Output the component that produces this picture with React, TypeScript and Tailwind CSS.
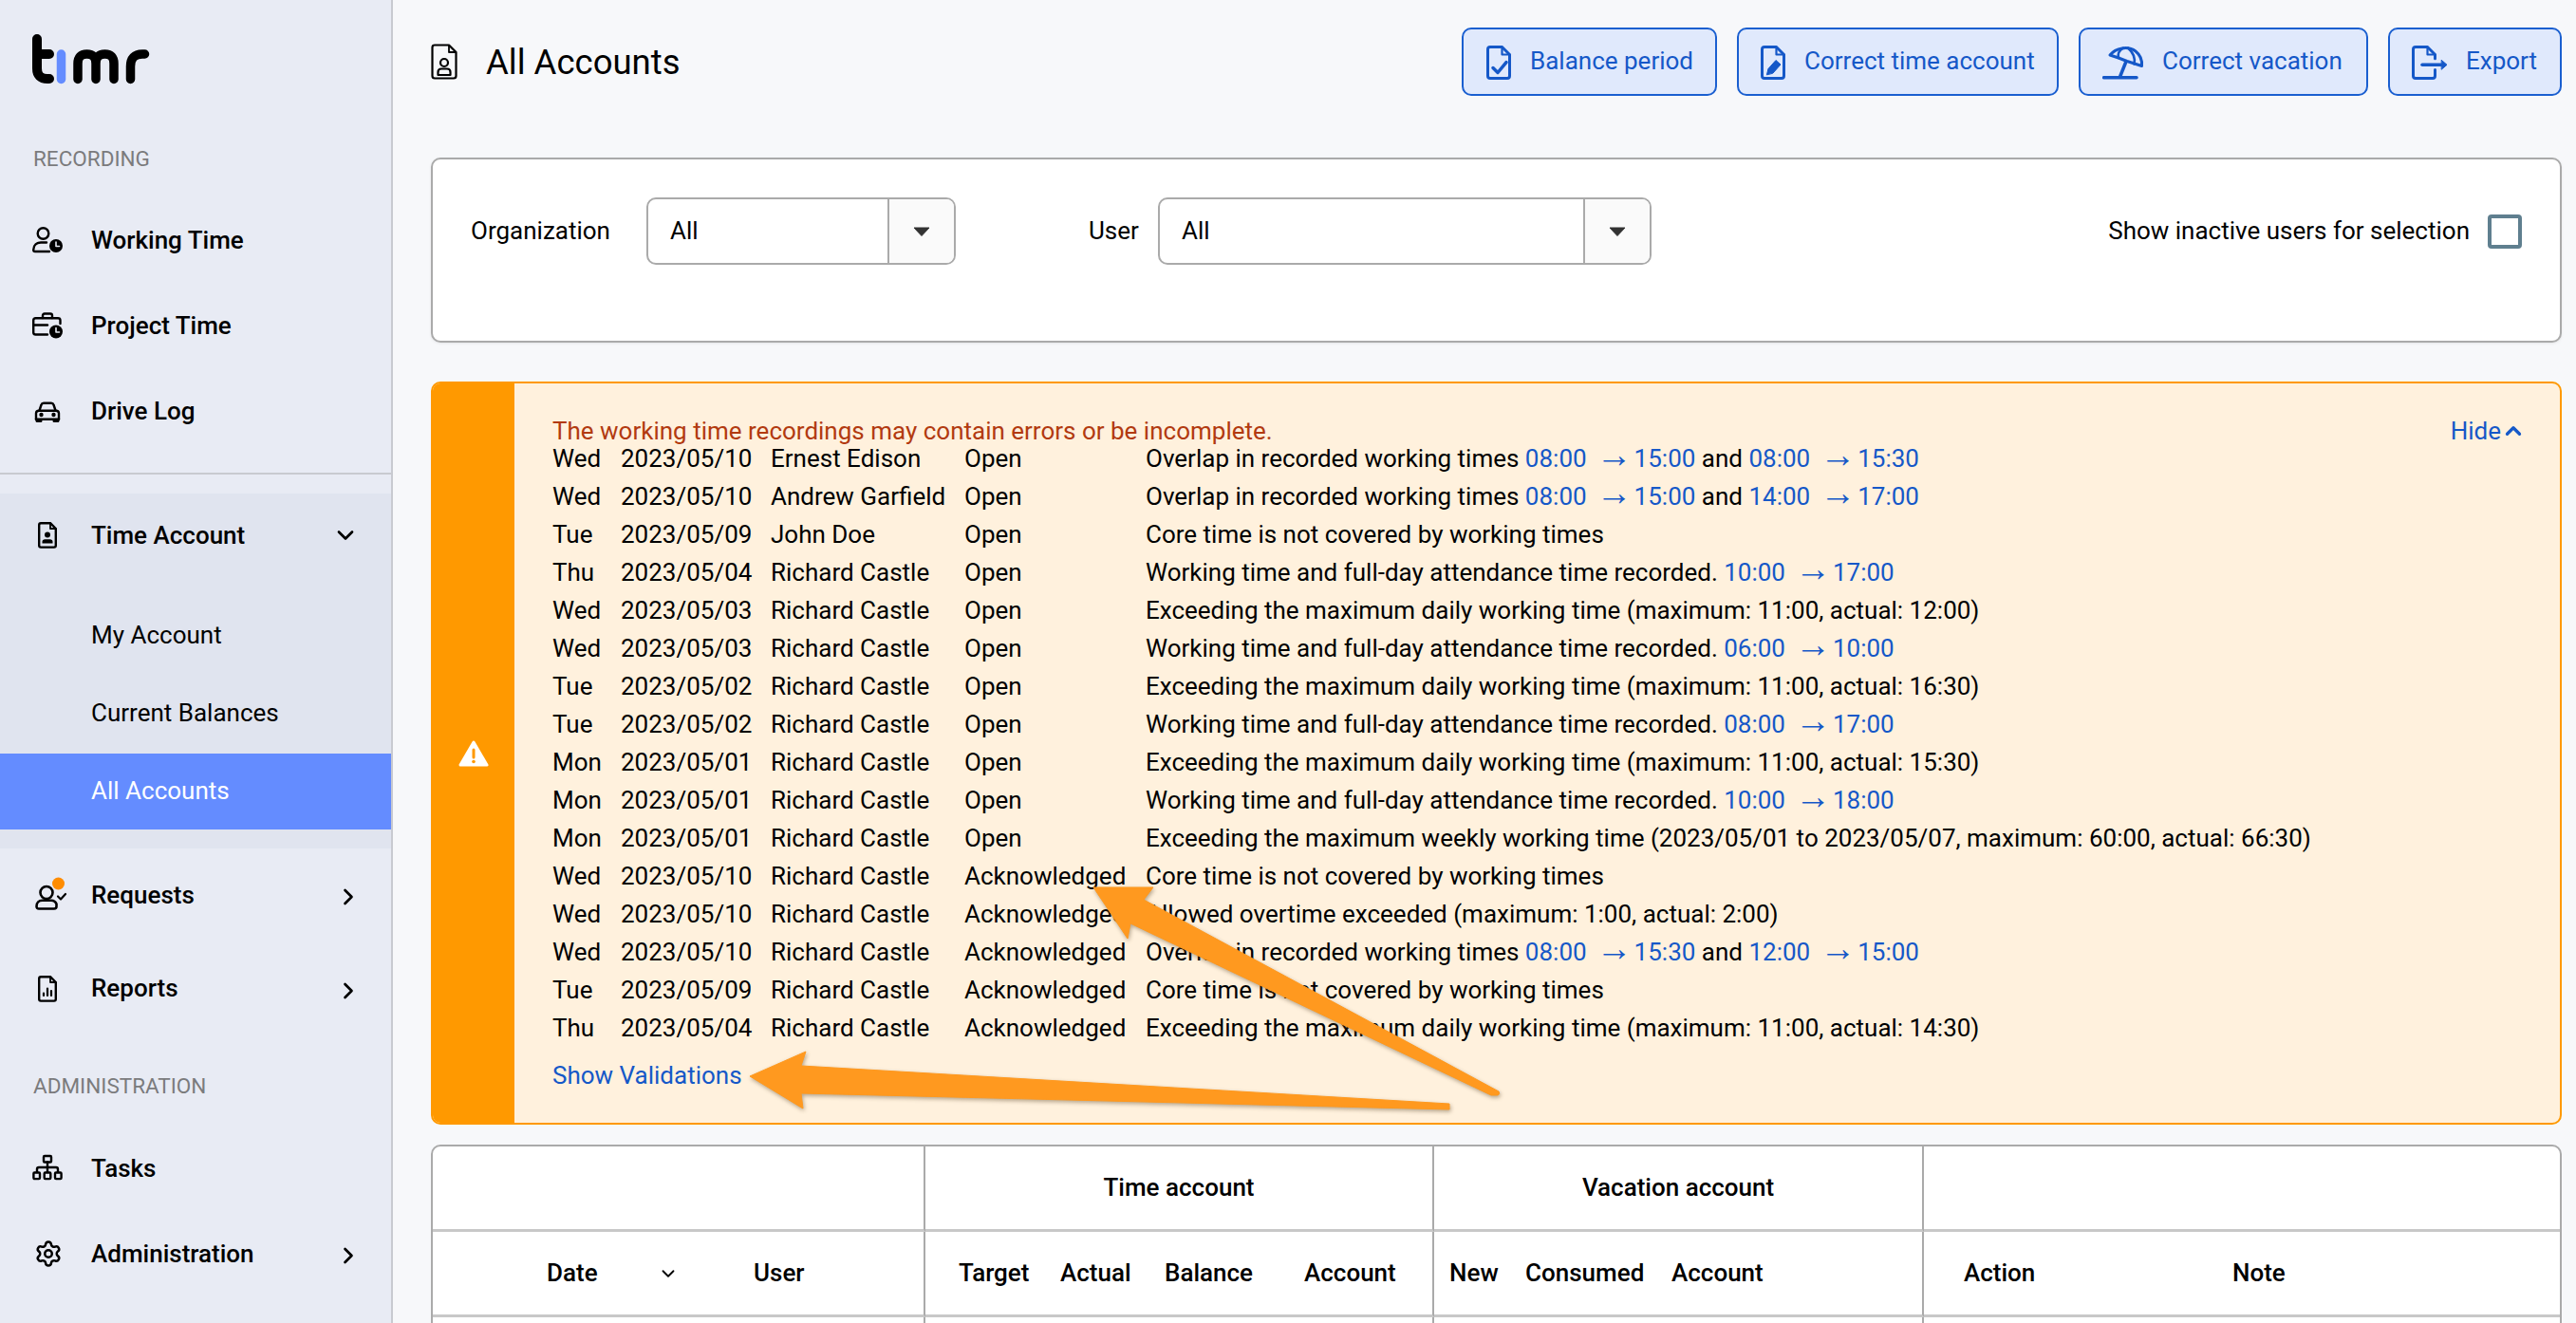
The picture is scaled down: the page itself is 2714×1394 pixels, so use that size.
import React from "react";
import { ChevronDown, ChevronRight, ChevronUp, Settings } from "lucide-react";

const BLUE = "#1558c8";

const T = ({ a, b }: { a: string; b: string }) => (
  <span className="text-[#1558c8]">
    {a}
    <span className="ml-[10px] mr-[2px] text-[38px] leading-[0] font-['Liberation_Sans']">→</span>
    {b}
  </span>
);

const EXC = (x: string) => `Exceeding the maximum daily working time (maximum: 11:00, actual: ${x})`;
const WT = "Working time and full-day attendance time recorded. ";
const OV = "Overlap in recorded working times ";
const CORE = "Core time is not covered by working times";
const RC = "Richard Castle";

type Row = [string, string, string, string, React.ReactNode];
const rows: Row[] = [
  ["Wed", "2023/05/10", "Ernest Edison", "Open", <>{OV}<T a="08:00" b="15:00" /> and <T a="08:00" b="15:30" /></>],
  ["Wed", "2023/05/10", "Andrew Garfield", "Open", <>{OV}<T a="08:00" b="15:00" /> and <T a="14:00" b="17:00" /></>],
  ["Tue", "2023/05/09", "John Doe", "Open", CORE],
  ["Thu", "2023/05/04", RC, "Open", <>{WT}<T a="10:00" b="17:00" /></>],
  ["Wed", "2023/05/03", RC, "Open", EXC("12:00")],
  ["Wed", "2023/05/03", RC, "Open", <>{WT}<T a="06:00" b="10:00" /></>],
  ["Tue", "2023/05/02", RC, "Open", EXC("16:30")],
  ["Tue", "2023/05/02", RC, "Open", <>{WT}<T a="08:00" b="17:00" /></>],
  ["Mon", "2023/05/01", RC, "Open", EXC("15:30")],
  ["Mon", "2023/05/01", RC, "Open", <>{WT}<T a="10:00" b="18:00" /></>],
  ["Mon", "2023/05/01", RC, "Open", "Exceeding the maximum weekly working time (2023/05/01 to 2023/05/07, maximum: 60:00, actual: 66:30)"],
  ["Wed", "2023/05/10", RC, "Acknowledged", CORE],
  ["Wed", "2023/05/10", RC, "Acknowledged", "Allowed overtime exceeded (maximum: 1:00, actual: 2:00)"],
  ["Wed", "2023/05/10", RC, "Acknowledged", <>{OV}<T a="08:00" b="15:30" /> and <T a="12:00" b="15:00" /></>],
  ["Tue", "2023/05/09", RC, "Acknowledged", CORE],
  ["Thu", "2023/05/04", RC, "Acknowledged", EXC("14:30")],
];

const Logo = () => (
  <svg width="130" height="56" viewBox="30 34 130 56" fill="none" strokeLinecap="round" strokeLinejoin="round" className="block">
    <path d="M39 41V72Q39 83 50 83H52M39 57H52" stroke="#000" strokeWidth="10" />
    <path d="M64.5 57V83.5" stroke="#648cff" strokeWidth="9.5" />
    <path d="M82 83.5V67Q82 57 91.5 57Q101 57 101 67V83.5M101 67Q101 57 110.5 57Q120 57 120 67V83.5" stroke="#000" strokeWidth="9.5" />
    <path d="M137.5 83.5V70Q137.5 57 150 57H152.5" stroke="#000" strokeWidth="9.5" />
  </svg>
);

const Clock = ({ cx, cy, bg = "#e8ebf4" }: { cx: number; cy: number; bg?: string }) => (
  <>
    <circle cx={cx} cy={cy} r="7" fill="#000" stroke="none" />
    <path d={`M${cx} ${cy - 4}V${cy + 0.5}H${cx + 3.5}`} stroke={bg} strokeWidth="1.6" fill="none" />
  </>
);

const S = ({ children, w = 32, h = 30 }: { children: React.ReactNode; w?: number; h?: number }) => (
  <svg width={w} height={h} viewBox={`0 0 ${w} ${h}`} fill="none" stroke="#000" strokeWidth="2.4" strokeLinecap="round" strokeLinejoin="round" className="block shrink-0">
    {children}
  </svg>
);

const IconWork = () => (
  <S>
    <circle cx="11.5" cy="8" r="5.8" />
    <path d="M18 27H3Q1.2 27 1.2 25.2C1.2 20 5 17.5 9 17.5H15" />
    <Clock cx={25} cy={21} />
  </S>
);
const IconProject = () => (
  <S>
    <path d="M11 7V4.5Q11 2.5 13 2.5H19Q21 2.5 21 4.5V7" />
    <path d="M16 24.5H3.5Q1.2 24.5 1.2 22.5V9.5Q1.2 7.3 3.5 7.3H27Q29.5 7.3 29.5 9.5V13" />
    <path d="M1.2 14.5H16" />
    <Clock cx={25} cy={21.5} />
  </S>
);
const IconCar = () => (
  <S>
    <path d="M7.5 14.5L9.5 8.5Q10 6.8 12 6.8H20Q22 6.8 22.5 8.5L24.5 14.5" />
    <path d="M4 24V17.5Q4 14.7 7 14.7H25Q28 14.7 28 17.5V24" />
    <path d="M4 23.8H28" />
    <path d="M5 25.5H9M23 25.5H27" strokeWidth="3" />
    <circle cx="9.5" cy="19" r="1" fill="#000" />
    <circle cx="22.5" cy="19" r="1" fill="#000" />
  </S>
);
const DocBase = ({ children }: { children?: React.ReactNode }) => (
  <S>
    <path d="M19 2.2H9Q7.2 2.2 7.2 4V25.8Q7.2 27.6 9 27.6H23Q24.8 27.6 24.8 25.8V8L19 2.2Z" />
    <path d="M19 2.2V8H24.8" strokeWidth="1.8" />
    {children}
  </S>
);
const IconDocPerson = () => (
  <DocBase>
    <circle cx="16" cy="14.5" r="3" fill="#000" stroke="none" />
    <path d="M10.5 23.5V22Q10.5 19.2 13.5 19.2H18.5Q21.5 19.2 21.5 22V23.5H10.5Z" fill="#000" stroke="none" />
  </DocBase>
);
const IconRequests = () => (
  <svg width="38" height="38" viewBox="0 0 38 38" fill="none" stroke="#000" strokeWidth="2.6" strokeLinecap="round" strokeLinejoin="round" className="block shrink-0 ml-[11px]">
    <circle cx="12" cy="16.5" r="6.5" />
    <path d="M16 33.5H4Q1.5 33.5 1.5 31C1.5 27 4 24.8 7.5 24.8H17Q21 24.8 22.5 28.5V31Q22.5 33.5 20 33.5H16Z" />
    <path d="M24 20.5L27 23.5L32 18" strokeWidth="2.2" />
    <circle cx="24.5" cy="7" r="6.5" fill="#ff8c00" stroke="none" />
  </svg>
);
const IconReports = () => (
  <DocBase>
    <path d="M12 22V19.5M16 22V14.5M20 22V17" strokeWidth="2.2" />
  </DocBase>
);
const IconTasks = () => (
  <S>
    <rect x="12" y="2" width="8" height="6.5" rx="1" />
    <path d="M16 8.5V14M5 19V16Q5 14 7 14H25Q27 14 27 16V19M16 14V19" />
    <rect x="1.4" y="19.5" width="6.6" height="6.6" rx="1" />
    <rect x="12.7" y="19.5" width="6.6" height="6.6" rx="1" />
    <rect x="24" y="19.5" width="6.6" height="6.6" rx="1" />
  </S>
);
const IconGear = () => <Settings size={30} strokeWidth={2} color="#000" className="shrink-0 ml-[1px]" />;

const Section = ({ children, cls }: { children: string; cls: string }) => (
  <div className={`pl-[35px] text-[22.5px] leading-[30px] text-[#7b7b7d] tracking-normal ${cls}`}>{children}</div>
);

const NavItem = ({ icon, label, h, chev }: { icon: React.ReactNode; label: string; h: string; chev?: "r" | "d" }) => (
  <div className={`flex items-center pl-[34px] ${h}`}>
    <div className="w-[32px] mr-[30px] flex justify-center">{icon}</div>
    <span className="text-[26px] font-medium text-black">{label}</span>
    {chev === "r" && <ChevronRight size={28} strokeWidth={2.3} color="#000" className="ml-auto mr-[31px] mt-[4px]" />}
    {chev === "d" && <ChevronDown size={28} strokeWidth={2.3} color="#000" className="ml-auto mr-[34px]" />}
  </div>
);

const B = ({ children, w = 32, h = 38 }: { children: React.ReactNode; w?: number; h?: number }) => (
  <svg width={w} height={h} viewBox={`0 0 ${w} ${h}`} fill="none" stroke={BLUE} strokeWidth="3" strokeLinecap="round" strokeLinejoin="round" className="block shrink-0 mt-[3px]">
    {children}
  </svg>
);
const FileShape = () => (
  <>
    <path d="M17.5 2.5H5Q2.5 2.5 2.5 5V33Q2.5 35.5 5 35.5H23Q25.5 35.5 25.5 33V10.5L17.5 2.5Z" />
    <path d="M17.5 2.5V10.5H25.5" strokeWidth="2.2" />
  </>
);

const BalIcon = () => (
  <B w={28}>
    <FileShape />
    <path d="M8 24.5L13 29.5L22 18.7" strokeWidth="3.5" />
  </B>
);
const CorrIcon = () => (
  <B w={28}>
    <FileShape />
    <path d="M7.5 31.5L9 25.5L17 16.5L22 21L14 30Z" fill={BLUE} strokeWidth="1" />
  </B>
);
const BeachIcon = () => (
  <B w={44}>
    <path d="M1.5 34.7H36" strokeWidth="3.5" />
    <path d="M24.5 19L18.5 34" strokeWidth="3.5" />
    <path d="M8 11C14 3.5 27 1 35 7C40 11 42 17 41.5 22.5L26 17.5L17 14Z" />
    <path d="M22 3.5C18 6 16 10 17 14M27 3.5C32 8 35 14 33.5 20.5" strokeWidth="2.6" />
  </B>
);
const ExportIcon = () => (
  <B w={42}>
    <path d="M25.5 26.5V33Q25.5 35.5 23 35.5H5Q2.5 35.5 2.5 33V5Q2.5 2.5 5 2.5H17.5L25.5 10.5V14.7" />
    <path d="M17.5 2.5V10.5H25.5" strokeWidth="2.2" />
    <path d="M12 21.3H32" strokeWidth="3.5" />
    <path d="M32.5 16.5L38 21.3L32.5 26Z" fill={BLUE} strokeWidth="1" />
  </B>
);

const Btn = ({ icon, label, cls }: { icon: React.ReactNode; label: string; cls: string }) => (
  <div className={`h-[72px] flex items-center rounded-[10px] border-[2.5px] border-[#1a5fd0] bg-[#e0e9fc] text-[#1558c8] text-[26px] ${cls}`}>
    {icon}
    <span>{label}</span>
  </div>
);

const Select = ({ wide }: { wide?: boolean }) => (
  <div className={`h-[71px] flex rounded-[10px] border-[2.5px] border-[#aaaaaa] overflow-hidden bg-white ${wide ? "w-[520px]" : "w-[326px]"}`}>
    <div className="flex-1 pl-[23px] flex items-center text-[26px] text-black">All</div>
    <div className="w-[70px] border-l-2 border-[#aaaaaa] bg-[#fafafa] flex items-center justify-center">
      <svg width="18" height="10" viewBox="0 0 18 10" className="block">
        <path d="M1 1H17L9 9.5Z" fill="#333" stroke="#333" strokeLinejoin="round" />
      </svg>
    </div>
  </div>
);

const cols = [338, 181, 142, 110, 147, 137, 96, 154, 266, 325, 345];
const thBase = "border-b-[3px] border-[#c8c8c8] font-medium text-[26px] text-black align-middle p-0";
const gr = "border-r-2 border-r-[#aaaaaa]";

export default function App() {
  return (
    <div className="relative flex h-screen overflow-hidden bg-[#f7f8fa] text-black font-[Roboto,sans-serif]">
      <aside className="w-[414px] shrink-0 h-full bg-[#e8ebf4] border-r-2 border-[#c8cad0] overflow-hidden">
        <div className="pt-[34px] pl-[30px] h-[152px]">
          <Logo />
        </div>
        <Section cls="mb-[26px]">RECORDING</Section>
        <NavItem icon={<IconWork />} label="Working Time" h="h-[90px]" />
        <NavItem icon={<IconProject />} label="Project Time" h="h-[90px]" />
        <NavItem icon={<IconCar />} label="Drive Log" h="h-[90px]" />
        <div className="mt-[20px] h-[2px] bg-[#c8cad0]" />
        <div className="mt-[20px] bg-[#e0e4ef] pb-[20px]">
          <NavItem icon={<IconDocPerson />} label="Time Account" h="h-[88px]" chev="d" />
          <div className="h-[20px]" />
          <div className="h-[82px] flex items-center pl-[96px] text-[26px]">My Account</div>
          <div className="h-[82px] flex items-center pl-[96px] text-[26px]">Current Balances</div>
          <div className="h-[80px] mt-[2px] pb-[1px] flex items-center pl-[96px] text-[26px] text-white bg-[#648cff]">All Accounts</div>
        </div>
        <NavItem icon={<IconRequests />} label="Requests" h="h-[98px]" chev="r" />
        <NavItem icon={<IconReports />} label="Reports" h="h-[99px]" chev="r" />
        <Section cls="pt-[38px] h-[95px]">ADMINISTRATION</Section>
        <NavItem icon={<IconTasks />} label="Tasks" h="h-[90px]" />
        <NavItem icon={<IconGear />} label="Administration" h="h-[90px]" chev="r" />
      </aside>

      <main className="flex-1 min-w-0 pl-[40px] pr-[15px]">
        <header className="h-[129px] mb-[37px] flex items-center">
          <svg width="28" height="38" viewBox="0 0 28 38" fill="none" stroke="#000" strokeWidth="2.2" strokeLinejoin="round" className="block shrink-0">
            <path d="M19 1.5H4Q1.5 1.5 1.5 4V34Q1.5 36.5 4 36.5H24Q26.5 36.5 26.5 34V9L19 1.5Z" />
            <path d="M19 1.5V9H26.5" strokeWidth="1.8" />
            <circle cx="14" cy="20" r="4" />
            <path d="M7.5 33V30Q7.5 26.5 11 26.5H17Q20.5 26.5 20.5 30V33Z" />
          </svg>
          <h1 className="ml-[30px] mt-[3px] text-[36.5px] font-normal">All Accounts</h1>
          <div className="ml-auto flex gap-[21px]">
            <Btn icon={<BalIcon />} label="Balance period" cls="w-[269px] pl-[23px] gap-[19px]" />
            <Btn icon={<CorrIcon />} label="Correct time account" cls="w-[339px] pl-[22px] gap-[19px]" />
            <Btn icon={<BeachIcon />} label="Correct vacation" cls="w-[305px] pl-[23px] gap-[19px]" />
            <Btn icon={<ExportIcon />} label="Export" cls="w-[183px] pl-[22px] gap-[16px]" />
          </div>
        </header>

        <section className="h-[195px] mb-[41px] rounded-[10px] border-2 border-[#aaaaaa] bg-white pt-[40px] pl-[40px] pr-[40px] flex items-start text-[26px] shadow-[0_1px_3px_rgba(0,0,0,0.08)]">
          <div className="h-[71px] flex items-center">
            <span className="w-[185px]">Organization</span>
            <Select />
            <span className="ml-[140px] w-[73px]">User</span>
            <Select wide />
          </div>
          <div className="ml-auto h-[71px] flex items-center gap-[19px]">
            <span>Show inactive users for selection</span>
            <div className="w-[36px] h-[36px] rounded-[4px] border-[4px] border-[#5f7f8f] bg-white" />
          </div>
        </section>

        <section className="h-[783px] mb-[21px] flex rounded-[10px] border-2 border-[#ff9900] bg-[#fff1dd] overflow-hidden text-[26px]">
          <div className="w-[86px] shrink-0 bg-[#ff9900] flex items-center justify-center">
            <svg width="32" height="28" viewBox="0 0 32 28" className="block">
              <path d="M16 2L30 26H2Z" fill="#fff" stroke="#fff" strokeWidth="3" strokeLinejoin="round" />
              <path d="M16 10V18" stroke="#ff9900" strokeWidth="3" strokeLinecap="round" />
              <circle cx="16" cy="22.5" r="1.8" fill="#ff9900" />
            </svg>
          </div>
          <div className="flex-1 min-w-0 pt-[35px] pl-[40px] pr-[38px]">
            <div className="h-[30px] mb-[-6px] flex items-center justify-between leading-[30px]">
              <span className="text-[#b23a10]">The working time recordings may contain errors or be incomplete.</span>
              <span className="flex items-center text-[#1558c8]">
                Hide
                <ChevronUp size={26} strokeWidth={3} color={BLUE} className="-mr-[2px]" />
              </span>
            </div>
            {rows.map((r, i) => (
              <div key={i} className="grid grid-cols-[72px_158px_204px_191px_1fr] h-[40px] leading-[40px] whitespace-nowrap">
                <span>{r[0]}</span>
                <span>{r[1]}</span>
                <span>{r[2]}</span>
                <span>{r[3]}</span>
                <span>{r[4]}</span>
              </div>
            ))}
            <div className="mt-[10px] h-[40px] leading-[40px] text-[#1558c8]">Show Validations</div>
          </div>
        </section>

        <section className="rounded-t-[10px] border-2 border-[#aaaaaa] bg-white">
          <table className="table-fixed border-separate border-spacing-0 w-[2241px]">
            <colgroup>
              {cols.map((c, i) => (
                <col key={i} style={{ width: c }} />
              ))}
            </colgroup>
            <thead>
              <tr className="h-[90px]">
                <th colSpan={2} className={`${thBase} ${gr}`} />
                <th colSpan={4} className={`${thBase} ${gr} text-center`}>Time account</th>
                <th colSpan={3} className={`${thBase} ${gr} text-center`}>Vacation account</th>
                <th colSpan={2} className={thBase} />
              </tr>
              <tr className="h-[90px] text-left">
                <th className={`${thBase} text-left pl-[120px]`}>
                  <span className="flex items-center">
                    Date
                    <ChevronDown size={22} strokeWidth={2} color="#000" className="ml-[63px]" />
                  </span>
                </th>
                <th className={`${thBase} ${gr} text-left`}>User</th>
                <th className={`${thBase} text-left pl-[35px]`}>Target</th>
                <th className={`${thBase} text-left`}>Actual</th>
                <th className={`${thBase} text-left`}>Balance</th>
                <th className={`${thBase} ${gr} text-left`}>Account</th>
                <th className={`${thBase} text-left pl-[16px]`}>New</th>
                <th className={`${thBase} text-left`}>Consumed</th>
                <th className={`${thBase} ${gr} text-left`}>Account</th>
                <th className={`${thBase} text-left pl-[42px]`}>Action</th>
                <th className={`${thBase} text-left`}>Note</th>
              </tr>
            </thead>
            <tbody>
              <tr className="h-[90px]">
                <td colSpan={2} className={gr} />
                <td colSpan={4} className={gr} />
                <td colSpan={3} className={gr} />
                <td colSpan={2} />
              </tr>
            </tbody>
          </table>
        </section>
      </main>

      <svg width="2714" height="1394" viewBox="0 0 2714 1394" className="absolute inset-0 pointer-events-none drop-shadow-[1px_2px_2px_rgba(90,70,40,0.45)]">
        <path
          d="M1152 935L1215 935L1205 948L1579 1150Q1581 1153 1578 1154L1571 1154L1191 973L1188 989Z"
          fill="#ff991f"
          stroke="#ff991f"
          strokeLinejoin="round"
        />
        <path
          d="M790 1134L849 1108L844 1123L1527 1163L1527 1169L844 1152L846 1168Z"
          fill="#ff991f"
          stroke="#ff991f"
          strokeLinejoin="round"
        />
      </svg>
    </div>
  );
}
